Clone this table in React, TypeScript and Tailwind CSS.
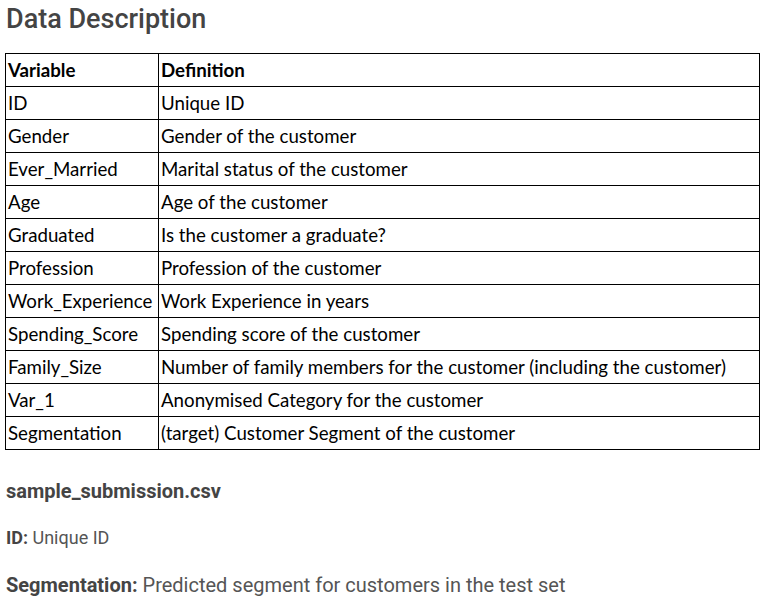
const rows: [string, string][] = [
  ["ID", "Unique ID"],
  ["Gender", "Gender of the customer"],
  ["Ever_Married", "Marital status of the customer"],
  ["Age", "Age of the customer"],
  ["Graduated", "Is the customer a graduate?"],
  ["Profession", "Profession of the customer"],
  ["Work_Experience", "Work Experience in years"],
  ["Spending_Score", "Spending score of the customer"],
  ["Family_Size", "Number of family members for the customer (including the customer)"],
  ["Var_1", "Anonymised Category for the customer"],
  ["Segmentation", "(target) Customer Segment of the customer"],
];

const App = () => {
  return (
    <div className="w-[778px] h-[605px] bg-white px-[5px] font-['Roboto',sans-serif] text-[#444]">
      {/* Title */}
      <h1 className="pt-[3px] pl-px text-[27px] font-medium leading-[32px] text-[#444]">
        Data Description
      </h1>

      {/* Table */}
      <table className="mt-[18px] w-[755px] border-collapse font-['Lato',sans-serif] text-[18.7px] text-black">
        <thead>
          <tr className="h-[33px]">
            <th className="w-[153px] border border-black px-[2px] text-left font-bold">Variable</th>
            <th className="border border-black px-[2px] text-left font-bold">Definition</th>
          </tr>
        </thead>
        <tbody>
          {rows.map(([k, v]) => (
            <tr key={k} className="h-[33px]">
              <td className="border border-black px-[2px]">{k}</td>
              <td className="border border-black px-[2px]">{v}</td>
            </tr>
          ))}
        </tbody>
      </table>

      {/* Submission file */}
      <div className="pl-px pt-[29px] text-[20px] leading-[24px]">
        <p className="font-bold">sample_submission.csv</p>
        <p className="mt-[23px] text-[18px] text-[#555]">
          <span className="font-bold text-[#444]">ID:</span> Unique ID
        </p>
        <p className="mt-[23px] text-[#555]">
          <span className="font-bold text-[#444]">Segmentation:</span> Predicted segment for customers in the test set
        </p>
      </div>
    </div>
  );
};

export default App;
